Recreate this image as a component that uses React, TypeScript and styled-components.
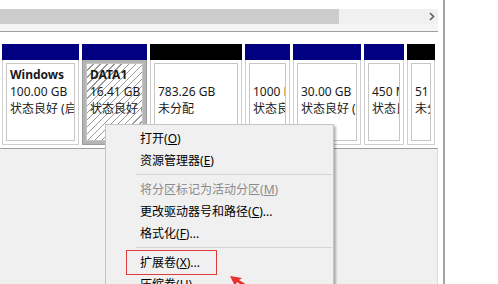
import styled, { createGlobalStyle } from 'styled-components';

const GlobalStyle = createGlobalStyle`
  html, body {
    margin: 0;
    padding: 0;
    background: #ffffff;
    overflow: hidden;
  }
  body {
    font-family: "Noto Sans", "Noto Sans CJK SC", sans-serif;
    font-size: 12px;
    color: #000;
  }
`;

type Part = {
  width: number;
  bar: string;
  name?: string;
  size: string;
  status: string;
  selected?: boolean;
};

const parts: Part[] = [
  { width: 77, bar: '#000080', name: 'Windows', size: '100.00 GB', status: '状态良好 (启动, 页面文件)' },
  { width: 65, bar: '#000080', name: 'DATA1', size: '16.41 GB', status: '状态良好 (基本数据分区)', selected: true },
  { width: 92, bar: '#000000', size: '783.26 GB', status: '未分配' },
  { width: 45, bar: '#000080', size: '1000 MB', status: '状态良好 (恢复分区)' },
  { width: 68, bar: '#000080', size: '30.00 GB', status: '状态良好 (基本数据分区)' },
  { width: 40, bar: '#000080', size: '450 MB', status: '状态良好 (恢复分区)' },
  { width: 28, bar: '#000000', size: '51 GB', status: '未分配' },
];

const Page = styled.div`
  position: relative;
  display: flex;
  width: 498px;
  height: 284px;
  overflow: hidden;
`;

const Pane = styled.div`
  display: flex;
  flex-direction: column;
  width: 443px;
  height: 100%;
  border-right: 2px solid #a5a5a5;
  background: #ffffff;
`;

const Rest = styled.div`
  flex: 1;
  background: #ffffff;
`;

const ScrollBar = styled.div`
  display: flex;
  width: 438px;
  height: 15px;
  margin-top: 9px;
  background: #f0f0f0;
`;

const Thumb = styled.div`
  width: 339px;
  background: #cdcdcd;
`;

const Track = styled.div`
  flex: 1;
  display: flex;
  justify-content: flex-end;
  align-items: center;
  padding-right: 3px;
`;

const ScrollFoot = styled.div`
  width: 438px;
  height: 7px;
  background: #f5f5f5;
  border-bottom: 1px solid #a0a0a0;
`;

const DiskRow = styled.div`
  display: flex;
  gap: 3px;
  height: 101px;
  padding: 12px 0 0 2px;
`;

const Column = styled.div<{ $w: number }>`
  display: flex;
  flex-direction: column;
  width: ${(p) => p.$w}px;
  flex-shrink: 0;
`;

const Bar = styled.div<{ $color: string }>`
  height: 16px;
  background: ${(p) => p.$color};
`;

const Body = styled.div<{ $sel?: boolean }>`
  flex: 1;
  display: flex;
  padding: 3px;
  border: 1px solid ${(p) => (p.$sel ? '#9c9c9c' : '#cfcfcf')};
  border-top: none;
  background: ${(p) => (p.$sel ? '#b4b4b4' : '#ffffff')};
`;

const Volume = styled.div<{ $sel?: boolean }>`
  flex: 1;
  min-width: 0;
  overflow: hidden;
  padding: 2px 0 0 3px;
  border: 1px solid #c6c6c6;
  background: ${(p) =>
    p.$sel
      ? 'repeating-linear-gradient(135deg, #ffffff 0 4px, #9a9a9a 4px 5px)'
      : '#ffffff'};
`;

const Line = styled.div<{ $bold?: boolean }>`
  height: 17px;
  line-height: 17px;
  white-space: nowrap;
  overflow: hidden;
  text-overflow: clip;
  font-weight: ${(p) => (p.$bold ? 700 : 400)};
  color: #1a1a1a;
`;

const LowerPanel = styled.div`
  flex: 1;
  width: 437px;
  margin-top: 3px;
  background: #f0f0f0;
  border-top: 1px solid #a0a0a0;
  border-right: 1px solid #dcdcdc;
`;

const Menu = styled.div`
  position: absolute;
  left: 105px;
  top: 124px;
  width: 227px;
  padding: 2px 0;
  background: #f0f0f0;
  border: 1px solid #c4c4c4;
  box-shadow: 2px 2px 2px rgba(0, 0, 0, 0.28);
`;

const Item = styled.div<{ $disabled?: boolean }>`
  display: flex;
  align-items: center;
  height: 22px;
  padding-left: 34px;
  white-space: nowrap;
  color: ${(p) => (p.$disabled ? '#8a8a8a' : '#000000')};
`;

const Separator = styled.div`
  height: 1px;
  margin: 3px 1px 3px 30px;
  background: #d5d5d5;
`;

const Highlight = styled.span`
  display: inline-flex;
  align-items: center;
  height: 23px;
  margin-left: -14px;
  padding: 0 16px 0 13px;
  border: 1px solid #de3b3b;
`;

const Arrow = styled.svg`
  position: absolute;
  left: 226px;
  top: 272px;
`;

const Chevron = () => (
  <svg width="6" height="9" viewBox="0 0 6 9">
    <polyline points="1,1 4.5,4.5 1,8" fill="none" stroke="#606060" strokeWidth="1.6" />
  </svg>
);

const menu: { label: string; key: string; tail?: string; disabled?: boolean; sepBefore?: boolean; mark?: boolean }[] = [
  { label: '打开', key: 'O' },
  { label: '资源管理器', key: 'E' },
  { label: '将分区标记为活动分区', key: 'M', disabled: true, sepBefore: true },
  { label: '更改驱动器号和路径', key: 'C', tail: '...' },
  { label: '格式化', key: 'F', tail: '...' },
  { label: '扩展卷', key: 'X', tail: '...', sepBefore: true, mark: true },
  { label: '压缩卷', key: 'H', tail: '...' },
];

const App = () => {
  return (
    <>
      <GlobalStyle />
      <Page>
        <Pane>
          <ScrollBar>
            <Thumb />
            <Track>
              <Chevron />
            </Track>
          </ScrollBar>
          <ScrollFoot />
          <DiskRow>
            {parts.map((p, i) => (
              <Column key={i} $w={p.width}>
                <Bar $color={p.bar} />
                <Body $sel={p.selected}>
                  <Volume $sel={p.selected}>
                    <Line $bold>{p.name ?? '\u00a0'}</Line>
                    <Line>{p.size}</Line>
                    <Line>{p.status}</Line>
                  </Volume>
                </Body>
              </Column>
            ))}
          </DiskRow>
          <LowerPanel />
        </Pane>
        <Rest />

        <Menu>
          {menu.map((m, i) => {
            const text = (
              <>
                {m.label}(<u>{m.key}</u>){m.tail ?? ''}
              </>
            );
            return (
              <div key={i}>
                {m.sepBefore && <Separator />}
                <Item $disabled={m.disabled}>
                  {m.mark ? <Highlight>{text}</Highlight> : text}
                </Item>
              </div>
            );
          })}
        </Menu>

        <Arrow width="30" height="14" viewBox="0 0 30 14">
          <polygon points="4,4 16,6 13,8 26,16 20,16 11,10 9,14" fill="#e8302c" />
        </Arrow>
      </Page>
    </>
  );
};

export default App;
